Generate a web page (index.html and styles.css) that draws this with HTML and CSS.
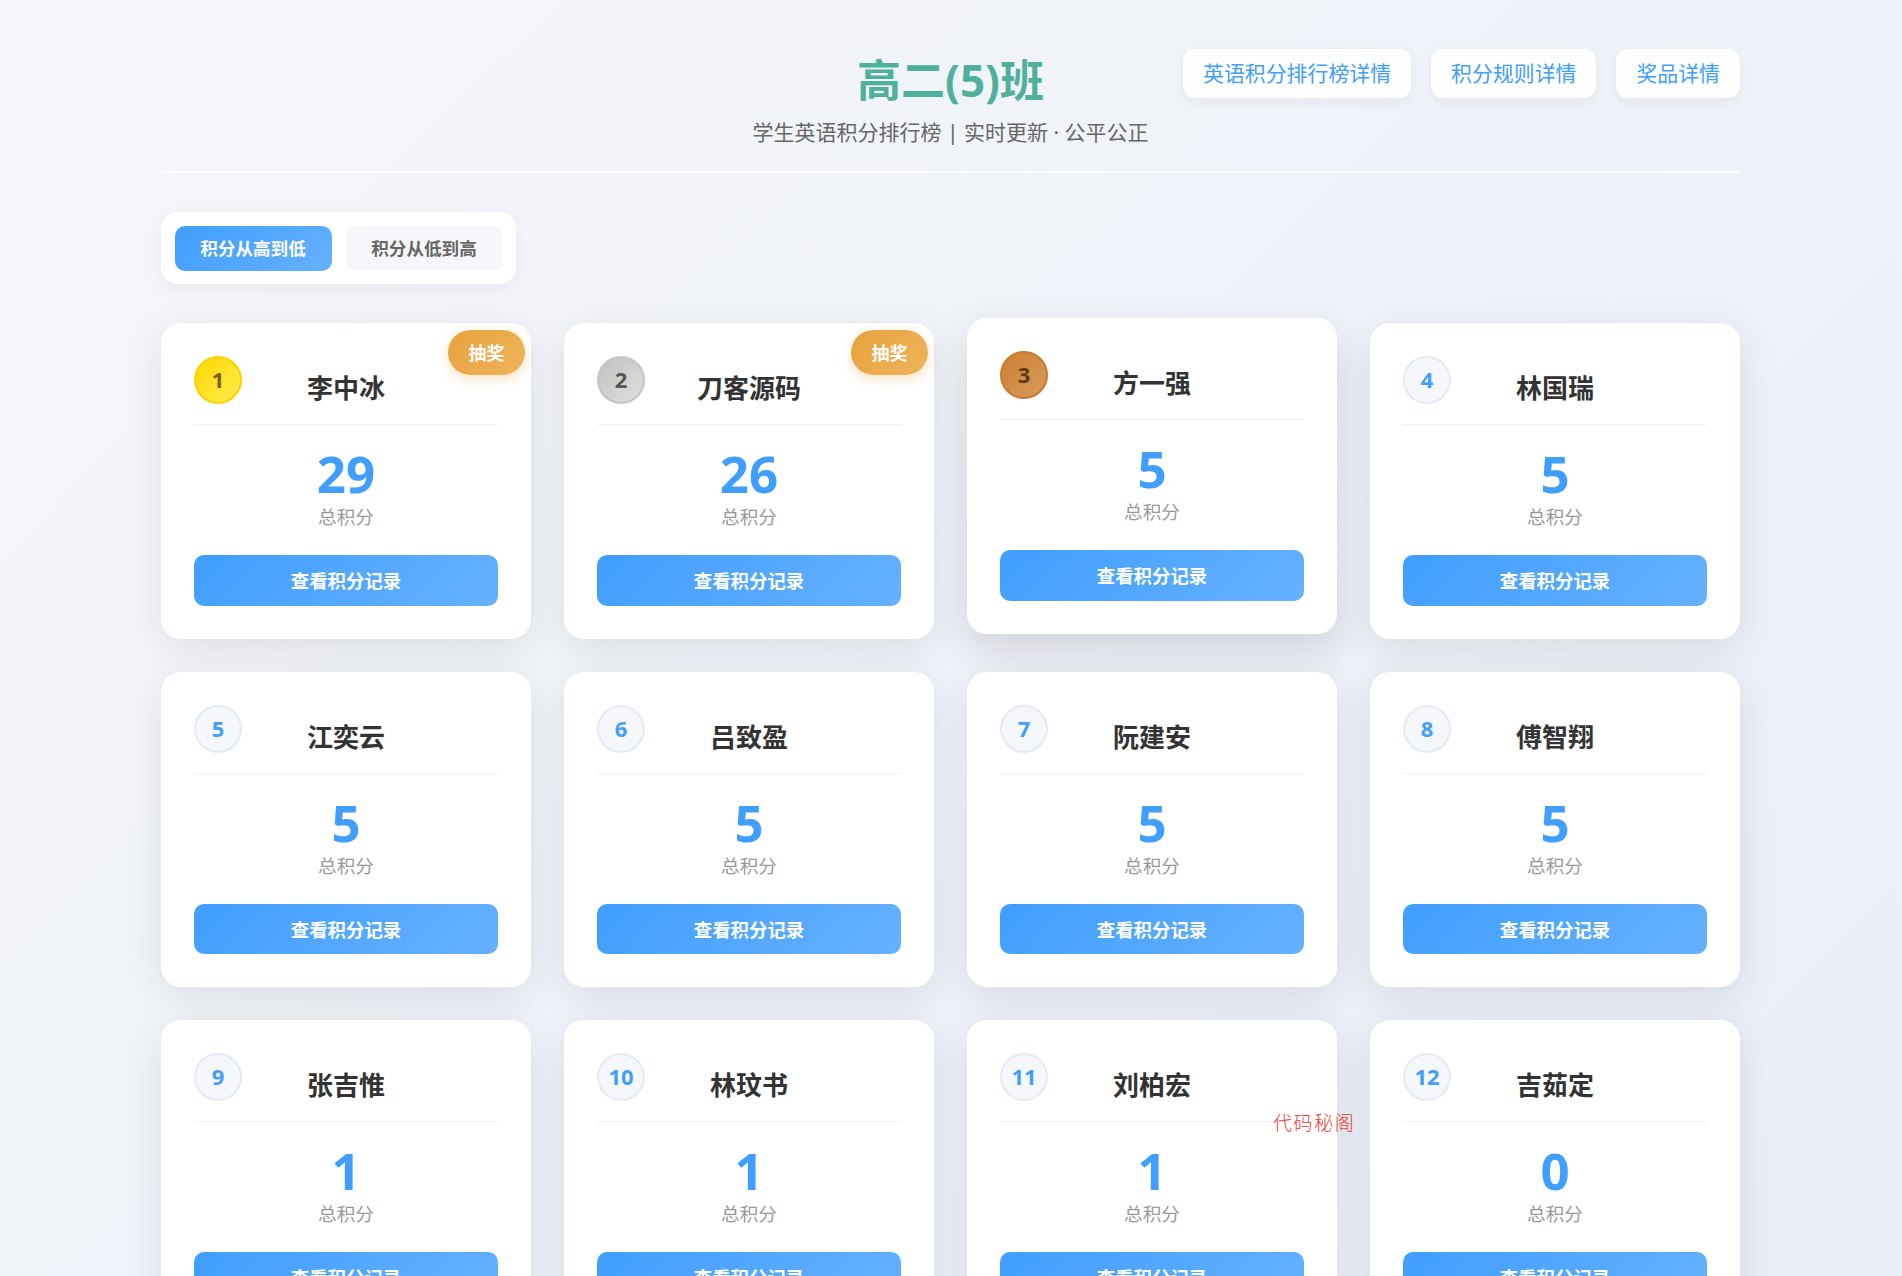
FILE: index.html
```html
<!DOCTYPE html>
<html lang="zh-CN">
<head>
    <meta charset="UTF-8">
    <meta name="viewport" content="width=device-width, initial-scale=1.0">
    <title>高二(5)班 学生英语积分排行榜</title>
    <link rel="stylesheet" href="styles.css">
</head>
<body>
    <div class="container">
        <header class="page-header">
            <div class="header-title">
                <h1>高二(5)班</h1>
                <p>学生英语积分排行榜 | 实时更新 · 公平公正</p>
            </div>
            <nav class="header-nav">
                <a href="#" class="nav-btn">英语积分排行榜详情</a>
                <a href="#" class="nav-btn">积分规则详情</a>
                <a href="#" class="nav-btn">奖品详情</a>
            </nav>
        </header>

        <div class="sort-bar">
            <button class="sort-btn active">积分从高到低</button>
            <button class="sort-btn">积分从低到高</button>
        </div>

        <div class="student-grid">
            <div class="card">
                <span class="rank rank-gold">1</span>
                <span class="lottery">抽奖</span>
                <h2 class="name">李中冰</h2>
                <div class="score">29</div>
                <div class="score-label">总积分</div>
                <button class="record-btn">查看积分记录</button>
            </div>
            <div class="card">
                <span class="rank rank-silver">2</span>
                <span class="lottery">抽奖</span>
                <h2 class="name">刀客源码</h2>
                <div class="score">26</div>
                <div class="score-label">总积分</div>
                <button class="record-btn">查看积分记录</button>
            </div>
            <div class="card card-hover">
                <span class="rank rank-bronze">3</span>
                <h2 class="name">方一强</h2>
                <div class="score">5</div>
                <div class="score-label">总积分</div>
                <button class="record-btn">查看积分记录</button>
            </div>
            <div class="card">
                <span class="rank">4</span>
                <h2 class="name">林国瑞</h2>
                <div class="score">5</div>
                <div class="score-label">总积分</div>
                <button class="record-btn">查看积分记录</button>
            </div>
            <div class="card">
                <span class="rank">5</span>
                <h2 class="name">江奕云</h2>
                <div class="score">5</div>
                <div class="score-label">总积分</div>
                <button class="record-btn">查看积分记录</button>
            </div>
            <div class="card">
                <span class="rank">6</span>
                <h2 class="name">吕致盈</h2>
                <div class="score">5</div>
                <div class="score-label">总积分</div>
                <button class="record-btn">查看积分记录</button>
            </div>
            <div class="card">
                <span class="rank">7</span>
                <h2 class="name">阮建安</h2>
                <div class="score">5</div>
                <div class="score-label">总积分</div>
                <button class="record-btn">查看积分记录</button>
            </div>
            <div class="card">
                <span class="rank">8</span>
                <h2 class="name">傅智翔</h2>
                <div class="score">5</div>
                <div class="score-label">总积分</div>
                <button class="record-btn">查看积分记录</button>
            </div>
            <div class="card">
                <span class="rank">9</span>
                <h2 class="name">张吉惟</h2>
                <div class="score">1</div>
                <div class="score-label">总积分</div>
                <button class="record-btn">查看积分记录</button>
            </div>
            <div class="card">
                <span class="rank">10</span>
                <h2 class="name">林玟书</h2>
                <div class="score">1</div>
                <div class="score-label">总积分</div>
                <button class="record-btn">查看积分记录</button>
            </div>
            <div class="card">
                <span class="rank">11</span>
                <h2 class="name">刘柏宏</h2>
                <div class="score">1</div>
                <div class="score-label">总积分</div>
                <button class="record-btn">查看积分记录</button>
            </div>
            <div class="card">
                <span class="rank">12</span>
                <h2 class="name">吉茹定</h2>
                <div class="score">0</div>
                <div class="score-label">总积分</div>
                <button class="record-btn">查看积分记录</button>
            </div>
        </div>
    </div>

    <div class="watermark">代码秘阁</div>
</body>
</html>
```

FILE: styles.css
```css
* {
    box-sizing: border-box;
}

body {
    margin: 0;
    font-family: "Noto Sans", "Noto Sans CJK SC", sans-serif;
    background: linear-gradient(135deg, #f5f7fa 0%, #e9edf6 100%);
    background-attachment: fixed;
    color: #333;
}

.container {
    width: 1579px;
    margin-left: 161px;
    padding: 49px 0 40px;
}

/* Header */
.page-header {
    display: grid;
    grid-template-columns: 1fr auto 1fr;
    padding-bottom: 24px;
    border-bottom: 2px solid rgba(255, 255, 255, 0.7);
    margin-bottom: 39px;
}

.header-title {
    grid-column: 2;
    text-align: center;
}

.header-title h1 {
    margin: 0 0 6px;
    font-size: 44px;
    line-height: 62px;
    font-weight: 700;
    color: #4fb09c;
}

.header-title p {
    margin: 0;
    font-size: 21px;
    line-height: 30px;
    color: #666;
}

.header-nav {
    grid-column: 3;
    display: flex;
    justify-content: flex-end;
    align-items: flex-start;
    gap: 20px;
}

.nav-btn {
    height: 49px;
    padding: 0 20px 3px;
    display: flex;
    align-items: center;
    font-size: 20.9px;
    color: #409eff;
    text-decoration: none;
    background-color: rgba(255, 255, 255, 0.9);
    border-radius: 12px;
    box-shadow: 0 4px 12px rgba(0, 0, 0, 0.05);
}

/* Sort */
.sort-bar {
    display: flex;
    width: fit-content;
    gap: 14px;
    padding: 13.5px;
    margin-bottom: 39px;
    background-color: #fff;
    border-radius: 16px;
    box-shadow: 0 5px 18px rgba(0, 0, 0, 0.05);
}

.sort-btn {
    width: 157px;
    height: 45px;
    padding: 0 0 2px;
    border: none;
    border-radius: 10px;
    font-family: inherit;
    font-size: 17.6px;
    font-weight: 700;
    color: #666;
    background-color: #f5f7fa;
}

.sort-btn.active {
    color: #fff;
    background: linear-gradient(135deg, #409eff, #66b1ff);
}

/* Cards */
.student-grid {
    display: grid;
    grid-template-columns: repeat(4, 1fr);
    gap: 33px;
}

.card {
    position: relative;
    padding: 33px;
    background-color: #fff;
    border-radius: 20px;
    box-shadow: 0 10px 40px rgba(0, 0, 0, 0.09);
    text-align: center;
}

.card-hover {
    transform: translateY(-5px);
    box-shadow: 0 15px 40px rgba(0, 0, 0, 0.13);
}

.rank {
    position: absolute;
    top: 33px;
    left: 33px;
    width: 48px;
    height: 48px;
    padding-bottom: 2px;
    display: flex;
    align-items: center;
    justify-content: center;
    border-radius: 50%;
    border: 2px solid #e4ebf5;
    background-color: #f5f7fa;
    font-size: 22px;
    font-weight: 700;
    color: #409eff;
}

.rank-gold {
    background: linear-gradient(135deg, #ffd700, #ffed4e);
    border-color: #ffd000;
    color: #7a5c00;
}

.rank-silver {
    background: linear-gradient(135deg, #c0c0c0, #e0e0e0);
    border-color: #c4c4c4;
    color: #555;
}

.rank-bronze {
    background: linear-gradient(135deg, #cd7f32, #d89b5c);
    border-color: #c9792f;
    color: #5f3a10;
}

.lottery {
    position: absolute;
    top: 7px;
    right: 6px;
    width: 77px;
    height: 45px;
    padding-bottom: 2px;
    display: flex;
    align-items: center;
    justify-content: center;
    border-radius: 23px;
    background: linear-gradient(135deg, #e6a23c, #f0b45c);
    box-shadow: 0 4px 12px rgba(230, 162, 60, 0.3);
    font-size: 18px;
    font-weight: 700;
    color: #fff;
}

.name {
    margin: 0 0 17px;
    padding: 13px 0 16px;
    border-bottom: 1px solid #f0f2f5;
    font-size: 26px;
    line-height: 39px;
    font-weight: 700;
    color: #333;
}

.score {
    font-size: 51px;
    line-height: 62px;
    font-weight: 700;
    color: #409eff;
}

.score-label {
    font-size: 18.6px;
    line-height: 26px;
    color: #999;
    margin-bottom: 25px;
}

.record-btn {
    display: block;
    width: 100%;
    height: 50.5px;
    padding: 0;
    border: none;
    border-radius: 10px;
    font-family: inherit;
    font-size: 18.4px;
    font-weight: 700;
    color: #fff;
    background: linear-gradient(135deg, #409eff, #66b1ff);
}

/* 水印 */
.watermark {
    position: absolute;
    top: 1111px;
    left: 1273px;
    font-size: 19px;
    line-height: 24px;
    letter-spacing: 1.6px;
    color: #f04030;
    font-weight: 300;
}
```
